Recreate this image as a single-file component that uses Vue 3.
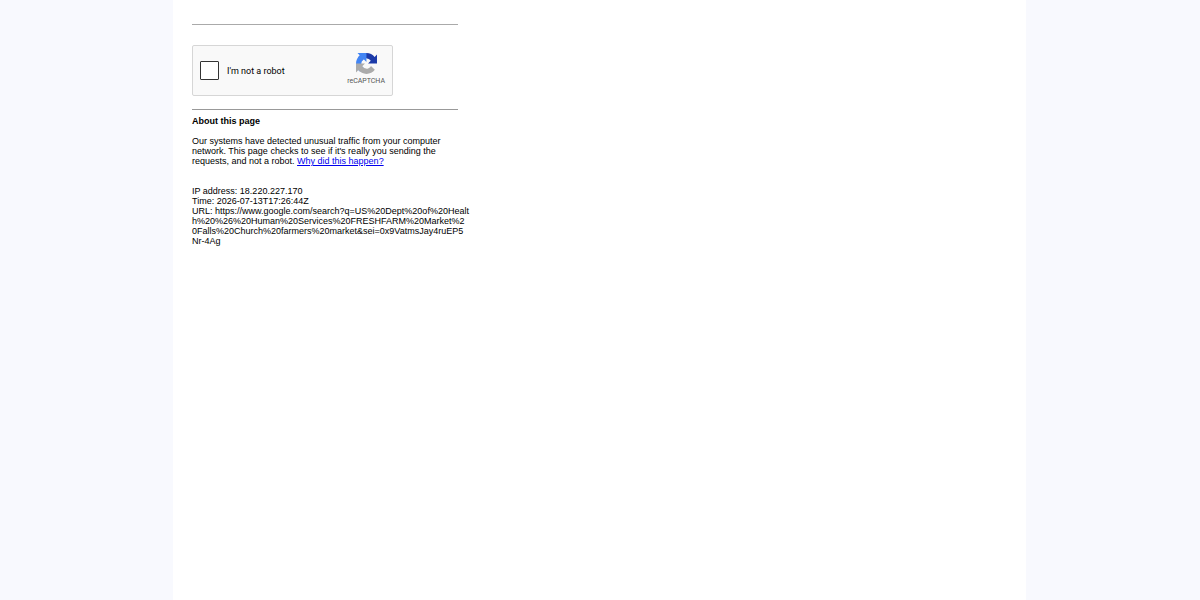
<script setup>
const ip = '18.220.227.170'
const time = '2026-07-13T17:26:44Z'
const urlLines = [
  'URL: https://www.google.com/search?q=US%20Dept%20of%20Healt',
  'h%20%26%20Human%20Services%20FRESHFARM%20Market%2',
  '0Falls%20Church%20farmers%20market&sei=0x9VatmsJay4ruEP5',
  'Nr-4Ag',
]
</script>

<template>
  <main class="page">
    <div class="content">
      <hr class="rule light" />
      <form class="captcha" @submit.prevent>
        <input id="robot" class="check" type="checkbox" />
        <label class="label" for="robot">I'm not a robot</label>
        <div class="brand">
          <svg class="logo" viewBox="0 0 64 64" aria-hidden="true">
            <path fill="#1c3aa9" d="M64 31.955l-.033-1.37V4.687l-7.16 7.16C50.948 4.674 42.033.093 32.05.093c-10.4 0-19.622 4.96-25.458 12.64l11.736 11.86a15.55 15.55 0 0 1 4.754-5.334c2.05-1.6 4.952-2.906 8.968-2.906.485 0 .86.057 1.135.163 4.976.393 9.288 3.14 11.828 7.124l-8.307 8.307L64 31.953" />
            <path fill="#4285f4" d="M31.862.094l-1.37.033H4.594l7.16 7.16C4.58 13.147 0 22.06 0 32.046c0 10.4 4.96 19.622 12.64 25.458L24.5 45.768a15.55 15.55 0 0 1-5.334-4.754c-1.6-2.05-2.906-4.952-2.906-8.968 0-.485.057-.86.163-1.135.393-4.976 3.14-9.288 7.124-11.828l8.307 8.307L31.86.095" />
            <path fill="#ababab" d="M.001 32.045l.033 1.37v25.898l7.16-7.16c5.86 7.173 14.774 11.754 24.76 11.754 10.4 0 19.622-4.96 25.458-12.64l-11.736-11.86a15.55 15.55 0 0 1-4.754 5.334c-2.05 1.6-4.952 2.906-8.968 2.906-.485 0-.86-.057-1.135-.163-4.976-.393-9.288-3.14-11.828-7.124l8.307-8.307c-10.522.04-22.4.066-27.295-.005" />
          </svg>
          <span class="name">reCAPTCHA</span>
        </div>
      </form>
      <hr class="rule" />
      <h1 class="title">About this page</h1>
      <p class="text">
        Our systems have detected unusual traffic from your computer network. This page checks to
        see if it's really you sending the requests, and not a robot.
        <a class="link" href="#why">Why did this happen?</a>
      </p>
      <p class="details">
        IP address: {{ ip }}<br />Time: {{ time }}
        <span v-for="line in urlLines" :key="line" class="line">{{ line }}</span>
      </p>
    </div>
  </main>
</template>

<style>
body {
  background: #f8f9fe;
}
</style>

<style scoped>
.page {
  box-sizing: border-box;
  min-height: 100vh;
  margin: 0 174px 0 173px;
  padding: 24px 19px;
  background: #fff;
  color: #000;
  font: 9px/10px "Liberation Sans", Arial, sans-serif;
}
.content {
  max-width: 280px;
}
.rule {
  max-width: 266px;
  height: 1px;
  margin: 0;
  border: 0;
  background: #999;
}
.light {
  background: #aaa;
}
.captcha {
  display: flex;
  align-items: center;
  box-sizing: border-box;
  width: 201px;
  height: 51px;
  margin: 20px 0 13px;
  padding: 0 7px;
  border: 1px solid #d6d6d6;
  border-radius: 2px;
  background: #f9f9f9;
}
.check {
  appearance: none;
  box-sizing: border-box;
  width: 19px;
  height: 19px;
  margin: 0 8px 0 0;
  border: 1px solid #333;
  border-radius: 1px;
  background: #fff;
}
.label {
  font: 9px/12px Roboto, sans-serif;
}
.brand {
  display: flex;
  flex-direction: column;
  align-items: center;
  gap: 3px;
  margin-left: auto;
  padding-bottom: 4px;
}
.logo {
  width: 21px;
  height: 21px;
}
.name {
  color: #555;
  font: 7px/8px Roboto, sans-serif;
}
.title {
  margin: 6px 0 10px;
  font-size: 9px;
  line-height: 10px;
}
.text {
  margin: 0 0 20px;
}
.link {
  color: #0000ee;
}
.details {
  margin: 0;
}
.line {
  display: block;
  overflow-wrap: anywhere;
}
</style>
